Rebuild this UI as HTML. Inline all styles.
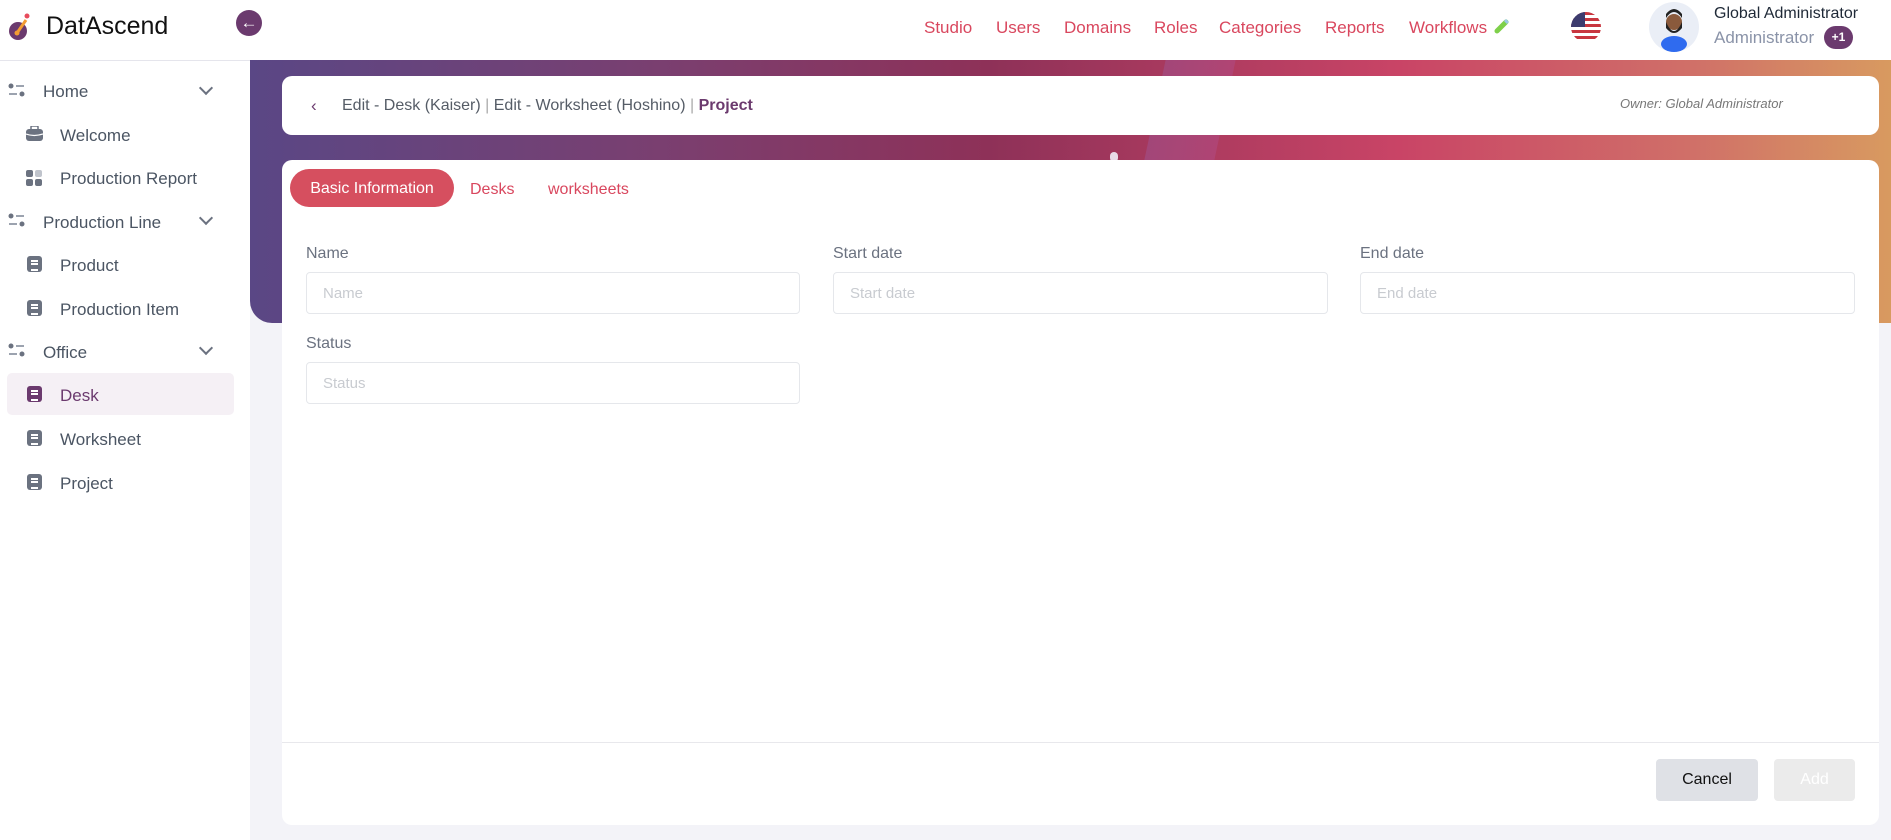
<!DOCTYPE html>
<html><head><meta charset="utf-8"><style>
*{box-sizing:border-box;margin:0;padding:0}
body{width:1891px;height:840px;overflow:hidden;background:#f3f3f8;font-family:"Liberation Sans",sans-serif;position:relative}
.abs{position:absolute}
.hdr{left:0;top:0;width:1891px;height:60px;background:#fff}
.side{left:0;top:60px;width:250px;height:780px;background:#fff;border-top:1px solid #e5e5ec}
.nav a{position:absolute;top:17px;font-size:17px;color:#d9475e;text-decoration:none}
.grp{position:absolute;left:43px;font-size:17px;color:#4b5563}
.itm{position:absolute;left:60px;font-size:17px;color:#4b5563}
.ic{position:absolute;left:27px;width:15px;height:16px;border-radius:3px;background:#6b7280}
.ic::after{content:"";position:absolute;left:4px;top:4px;width:7px;height:7px;border-top:2px solid #fff;border-bottom:2px solid #fff}
.ic::before{content:"";position:absolute;left:4px;top:7px;width:7px;height:2px;background:#fff}
.gi{position:absolute;left:8px;width:18px;height:14px}
.chev{position:absolute;left:201px;width:10px;height:10px;border-right:2px solid #6b7280;border-bottom:2px solid #6b7280;transform:rotate(45deg)}
.banner{left:250px;top:60px;width:1641px;height:263px;border-bottom-left-radius:22px;background:linear-gradient(90deg,#5a4785 0%,#7a3f70 25%,#8e3158 45%,#c94466 70%,#d07068 88%,#d89a60 100%)}
.card{background:#fff;border-radius:10px}
.lbl{position:absolute;font-size:16px;color:#6b7280}
.inp{position:absolute;height:42px;border:1px solid #e5e7eb;border-radius:4px;font-size:15px;color:#c8cbd0;padding:12px 16px}
.sep{color:#aaa}
</style></head><body>
<div class="abs hdr"></div>
<svg class="abs" style="left:7px;top:12px" width="26" height="30" viewBox="0 0 26 30"><circle cx="11" cy="19" r="9" fill="#6b3a6e"/><path d="M10 21 L19 8" stroke="#f39c33" stroke-width="3"/><circle cx="10" cy="21" r="2.5" fill="#f39c33"/><circle cx="20" cy="4" r="2.5" fill="#e74c5c"/></svg>
<div class="abs" style="left:46px;top:12px;font-size:25px;color:#111">DatAscend</div>
<div class="abs" style="left:236px;top:10px;width:26px;height:26px;border-radius:50%;background:#6b3a6e;color:#fff;font-size:17px;line-height:25px;text-align:center">&#8592;</div>
<div class="nav"><a style="left:924px;top:18px">Studio</a><a style="left:996px;top:18px">Users</a><a style="left:1064px;top:18px">Domains</a><a style="left:1154px;top:18px">Roles</a><a style="left:1219px;top:18px">Categories</a><a style="left:1325px;top:18px">Reports</a><a style="left:1409px;top:18px">Workflows</a></div>
<svg class="abs" style="left:1494px;top:18px" width="16" height="16" viewBox="0 0 16 16"><path d="M3 13 L12 4" stroke="#7ed04a" stroke-width="5" stroke-linecap="round"/><path d="M11 2 L14 5" stroke="#9cc8e8" stroke-width="3"/></svg>
<svg class="abs" style="left:1571px;top:12px" width="30" height="30" viewBox="0 0 30 30"><defs><clipPath id="c"><circle cx="15" cy="15" r="15"/></clipPath></defs><g clip-path="url(#c)"><rect width="30" height="30" fill="#fff"/><g fill="#c8363f"><rect y="0" width="30" height="3"/><rect y="6" width="30" height="3"/><rect y="12" width="30" height="3"/><rect y="18" width="30" height="3"/><rect y="24" width="30" height="3"/></g><rect width="14" height="15" fill="#3c3b6e"/></g></svg>
<div class="abs" style="left:1649px;top:2px;width:50px;height:50px;border-radius:50%;background:#eaeef6"></div>
<svg class="abs" style="left:1649px;top:2px" width="50" height="50" viewBox="0 0 50 50"><ellipse cx="25" cy="42" rx="13" ry="8" fill="#2f6bef"/><circle cx="25" cy="20" r="8" fill="#8a5a3c"/><path d="M17 20 Q25 38 33 20 L33 26 Q25 36 17 26Z" fill="#222"/><path d="M17 16 Q25 4 33 16 L33 12 Q25 2 17 12Z" fill="#222"/></svg>
<div class="abs" style="left:1714px;top:5px;font-size:16px;color:#1f2937">Global Administrator</div>
<div class="abs" style="left:1714px;top:28px;font-size:17px;color:#8a93a8">Administrator</div>
<div class="abs" style="left:1824px;top:26px;width:29px;height:23px;border-radius:12px;background:#6b3a6e;color:#fff;font-size:12px;font-weight:bold;line-height:23px;text-align:center">+1</div>

<div class="abs side"></div>
<svg class="gi" style="top:83px" viewBox="0 0 18 14"><circle cx="3" cy="3" r="2.5" fill="#6b7280"/><rect x="8" y="2" width="8" height="2" fill="#9ca3af"/><rect x="1" y="10" width="8" height="2" fill="#9ca3af"/><circle cx="14" cy="11" r="2.5" fill="#6b7280"/></svg>
<div class="grp" style="top:82px">Home</div><div class="chev" style="top:83px"></div>
<svg class="abs" style="left:26px;top:126px" width="17" height="15" viewBox="0 0 17 15"><rect x="0" y="3" width="17" height="12" rx="3" fill="#6b7280"/><rect x="5" y="0" width="7" height="4" rx="1" fill="none" stroke="#6b7280" stroke-width="1.5"/><path d="M0 8 Q8 11 17 8" stroke="#fff" stroke-width="1.2" fill="none"/></svg>
<div class="itm" style="top:126px">Welcome</div>
<svg class="abs" style="left:26px;top:170px" width="17" height="16" viewBox="0 0 17 16"><rect width="7" height="7" rx="2" fill="#6b7280"/><rect x="9" width="7" height="7" rx="2" fill="#c0c4cc"/><rect y="9" width="7" height="7" rx="2" fill="#6b7280"/><rect x="9" y="9" width="7" height="7" rx="2" fill="#6b7280"/></svg>
<div class="itm" style="top:169px">Production Report</div>
<svg class="gi" style="top:213px" viewBox="0 0 18 14"><circle cx="3" cy="3" r="2.5" fill="#6b7280"/><rect x="8" y="2" width="8" height="2" fill="#9ca3af"/><rect x="1" y="10" width="8" height="2" fill="#9ca3af"/><circle cx="14" cy="11" r="2.5" fill="#6b7280"/></svg>
<div class="grp" style="top:213px">Production Line</div><div class="chev" style="top:213px"></div>
<div class="ic" style="top:256px"></div><div class="itm" style="top:256px">Product</div>
<div class="ic" style="top:300px"></div><div class="itm" style="top:300px">Production Item</div>
<svg class="gi" style="top:343px" viewBox="0 0 18 14"><circle cx="3" cy="3" r="2.5" fill="#6b7280"/><rect x="8" y="2" width="8" height="2" fill="#9ca3af"/><rect x="1" y="10" width="8" height="2" fill="#9ca3af"/><circle cx="14" cy="11" r="2.5" fill="#6b7280"/></svg>
<div class="grp" style="top:343px">Office</div><div class="chev" style="top:343px"></div>
<div class="abs" style="left:7px;top:373px;width:227px;height:42px;border-radius:5px;background:#f5f0f5"></div>
<div class="ic" style="top:386px;background:#6b3a6e"></div><div class="itm" style="top:386px;color:#6b3a6e">Desk</div>
<div class="ic" style="top:430px"></div><div class="itm" style="top:430px">Worksheet</div>
<div class="ic" style="top:474px"></div><div class="itm" style="top:474px">Project</div>

<div class="abs banner"></div>
<div class="abs" style="left:1155px;top:60px;width:70px;height:100px;background:linear-gradient(90deg,#a0508a,#b04a80);transform:skewX(-12deg);opacity:.6"></div>
<div class="abs" style="left:1110px;top:152px;width:8px;height:10px;border-radius:4px;background:#e8dbe8"></div>

<div class="abs card" style="left:282px;top:76px;width:1597px;height:59px"></div>
<div class="abs" style="left:311px;top:96px;font-size:17px;color:#6b3a6e">&#8249;</div>
<div class="abs" style="left:342px;top:97px;font-size:16px;color:#555c66">Edit - Desk (Kaiser) <span class="sep">&#124;</span> Edit - Worksheet (Hoshino) <span class="sep">&#124;</span> <b style="color:#6b3a6e">Project</b></div>
<div class="abs" style="left:1620px;top:96px;font-size:13px;font-style:italic;color:#777">Owner: Global Administrator</div>

<div class="abs card" style="left:282px;top:160px;width:1597px;height:665px"></div>
<div class="abs" style="left:290px;top:169px;width:164px;height:38px;border-radius:19px;background:#d64f5f;color:#fff;font-size:16px;line-height:40px;text-align:center">Basic Information</div>
<div class="abs" style="left:470px;top:181px;font-size:16px;color:#d9475e">Desks</div>
<div class="abs" style="left:548px;top:181px;font-size:16px;color:#d9475e">worksheets</div>
<div class="lbl" style="left:306px;top:245px">Name</div>
<div class="lbl" style="left:833px;top:245px">Start date</div>
<div class="lbl" style="left:1360px;top:245px">End date</div>
<div class="inp" style="left:306px;top:272px;width:494px">Name</div>
<div class="inp" style="left:833px;top:272px;width:495px">Start date</div>
<div class="inp" style="left:1360px;top:272px;width:495px">End date</div>
<div class="lbl" style="left:306px;top:335px">Status</div>
<div class="inp" style="left:306px;top:362px;width:494px">Status</div>
<div class="abs" style="left:282px;top:742px;width:1597px;height:1px;background:#e8e8ec"></div>
<div class="abs" style="left:1656px;top:759px;width:102px;height:42px;border-radius:4px;background:#dfe1e6;color:#111;font-size:16px;line-height:42px;text-align:center">Cancel</div>
<div class="abs" style="left:1774px;top:759px;width:81px;height:42px;border-radius:4px;background:#ebebeb;color:#fff;font-size:16px;line-height:42px;text-align:center">Add</div>
</body></html>
